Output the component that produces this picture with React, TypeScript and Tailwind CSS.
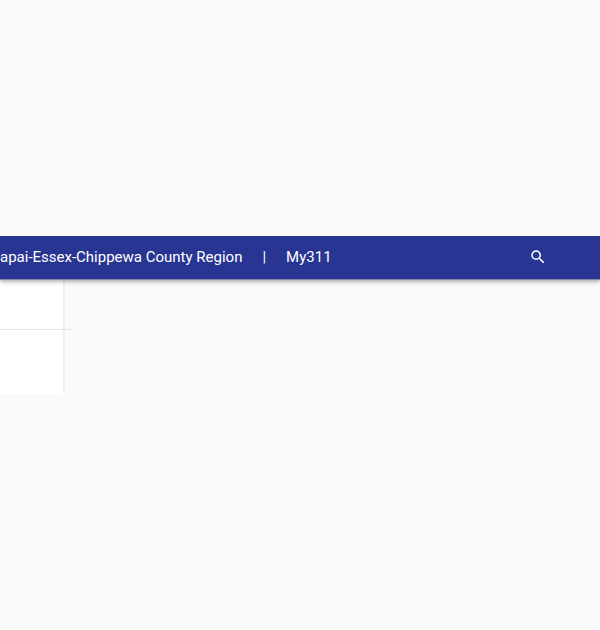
import React from "react";

export default function App() {
  return (
    <div className="min-h-screen overflow-hidden bg-[#fafafa] pt-[236px] font-[Roboto,sans-serif]">
      <header className="relative flex h-[43px] items-center justify-between bg-[#283593] pr-[53px] pb-px text-white shadow-[0_1px_0_#83879f,0_3px_4px_rgba(0,0,0,0.3)]">
        <nav className="flex items-center text-[15px] leading-6 whitespace-nowrap">
          <a href="#region">apai-Essex-Chippewa County Region</a>
          <span className="mx-5">|</span>
          <a href="#my311">My311</a>
        </nav>
        <button type="button" aria-label="Search" className="pb-px">
          <svg viewBox="0 0 24 24" className="size-[18px]" fill="currentColor">
            <path d="M15.5 14h-.79l-.28-.27A6.471 6.471 0 0 0 16 9.5 6.5 6.5 0 1 0 9.5 16c1.61 0 3.09-.59 4.23-1.57l.27.28v.79l5 4.99L20.49 19l-4.99-5zm-6 0C7.01 14 5 11.99 5 9.5S7.01 5 9.5 5 14 7.01 14 9.5 11.99 14 9.5 14z" />
          </svg>
        </button>
      </header>
      <main className="w-[73px]">
        <div className="h-[51px] border-b border-[#e4e4e4]">
          <div className="h-full w-[65px] border-r-2 border-[#f0f0f0] bg-white" />
        </div>
        <div className="h-16 w-[65px] border-r-2 border-[#f0f0f0] bg-white" />
      </main>
    </div>
  );
}
